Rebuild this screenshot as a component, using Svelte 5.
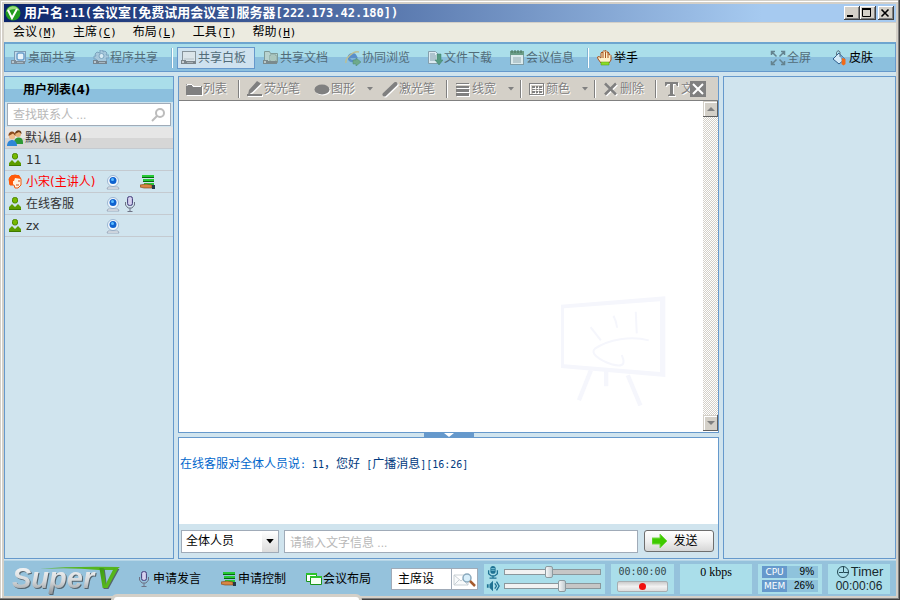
<script lang="ts">
type Tool = { icon: string; label: string; active?: boolean };
type User = {
    name: string;
    icon: string;
    host?: boolean;
    cam?: boolean;
    mic?: boolean;
    share?: boolean;
};

const menus = [
    { label: "会议", key: "M" },
    { label: "主席", key: "C" },
    { label: "布局", key: "L" },
    { label: "工具", key: "T" },
    { label: "帮助", key: "H" },
];

const shareTools: Tool[] = [
    { icon: "desktop", label: "桌面共享" },
    { icon: "gear", label: "程序共享" },
];

const roomTools: Tool[] = [
    { icon: "board", label: "共享白板", active: true },
    { icon: "docs", label: "共享文档" },
    { icon: "browse", label: "协同浏览" },
    { icon: "download", label: "文件下载" },
    { icon: "notes", label: "会议信息" },
];

const drawTools = [
    { icon: "folder", label: "列表", sep: true },
    { icon: "marker", label: "荧光笔" },
    { icon: "ellipse", label: "图形", caret: true },
    { icon: "laser", label: "激光笔", sep: true },
    { icon: "lines", label: "线宽", caret: true, sep: true },
    { icon: "palette", label: "颜色", caret: true, sep: true },
    { icon: "cross", label: "删除", sep: true },
    { icon: "text", label: "文" },
];

const users: User[] = [
    { name: "11", icon: "user" },
    { name: "小宋(主讲人)", icon: "host", host: true, cam: true, share: true },
    { name: "在线客服", icon: "user", cam: true, mic: true },
    { name: "zx", icon: "user", cam: true },
];

let keyword = $state("");
let target = $state("全体人员");
let message = $state("");
let role = $state("主席设");
let micLevel = $state(46);
let speakerLevel = $state(61);
</script>

{#snippet icon(name: string)}
    <svg class="icon" viewBox="0 0 16 16" aria-hidden="true">
        {#if name === "desktop"}
            <rect x="3.5" y="1.5" width="11" height="10" fill="#c5dced" stroke="#7d9db5" />
            <rect x="6" y="3" width="7" height="7" rx="2" fill="#e9f4fb" stroke="#6da0cc" stroke-width="1.500" />
            <path d="M0 10h5v4H0zM5 11h9v3H5z" fill="#7d8d98" />
            <path d="M1 11h2v2H1z" fill="#b9c9d3" />
            <path d="M6 12.500h6" stroke="#a9b9c3" />
        {:else if name === "gear"}
            <path d="M7 0h3v2l2-1 2 2-1 2h3v3h-3l1 2-2 2H5L3 9H1V6h2L2 4l2-2 3 1z" fill="#a7c8dc" stroke="#7ba4bf" />
            <circle cx="8.5" cy="6" r="2.5" fill="#d9ecf5" stroke="#7ba4bf" />
            <path d="M0 10h5v4H0zM5 11h9v3H5z" fill="#76858f" />
            <path d="M1 11h2v2H1z" fill="#b9c9d3" />
            <path d="M6 12.500h6" stroke="#a9b9c3" />
        {:else if name === "board"}
            <rect x="1.5" y="1.5" width="13" height="10" fill="#dbe5ea" stroke="#87949c" />
            <path d="M3 9h10" stroke="#b5c1c8" />
            <path d="M0 10h5v4H0zM5 11h10v3H5z" fill="#7b858b" />
            <path d="M1 11h2v2H1z" fill="#c8ced2" />
            <path d="M6 12.500h6" stroke="#a9b1b6" />
        {:else if name === "docs"}
            <path d="M1.500 1.500h5l1 2h7v9h-13z" fill="#b8d3cf" stroke="#7f9b98" />
            <path d="M7 5h6v6H7z" fill="#dcebea" stroke="#7fa096" />
            <path d="M8 7h4M8 9h4" stroke="#79a28f" />
            <path d="M0 10h5v4H0zM5 11h9v3H5z" fill="#7a8a8d" />
            <path d="M1 11h2v2H1z" fill="#b9c9c9" />
        {:else if name === "browse"}
            <path d="M11 9.500c-1 2-6 2.500-7-1-.8-4 5-6 7-1.500H4" fill="none" stroke="#5a8fc9" stroke-width="2.500" />
            <path d="M1 13C0 9 8 0 14 2" fill="none" stroke="#bcbf93" stroke-width="1.500" />
            <path d="M8 10h3V8l5 4-5 4v-2H8z" fill="#6ea98a" stroke="#4f8a73" stroke-width=".5" />
        {:else if name === "download"}
            <path d="M1.500 1.500h7l2 2v10h-9z" fill="#dcebf2" stroke="#849fad" />
            <path d="M3 4h5M3 6h6M3 8h6M3 10h6" stroke="#7f9caa" />
            <path d="M10 4h4v6h2l-4 5-4-5h2z" fill="#569b82" stroke="#3f806c" stroke-width=".5" />
        {:else if name === "notes"}
            <rect x="1.500" y="1.500" width="13" height="13" fill="#dcebed" stroke="#7f9ca6" />
            <path d="M1 1h14v4H1z" fill="#6b9d87" />
            <path d="M3 0v3M6 0v3M9 0v3M12 0v3" stroke="#46705d" />
            <path d="M4 8h8M4 10h8M4 12h8" stroke="#91a8b0" />
        {:else if name === "hand"}
            <path d="M4 13L1 9 .5 7 2 6.500 4 8V3l1-1 1 1V1.500l1-1 1 1V1l1-.5 1 1v1l1-.5 1 1v2l1-.5 1 1V10l-2 3z" fill="#fff0c9" stroke="#a6511d" />
            <path d="M6 3v5M8.500 2v6M11 3v5" stroke="#a6511d" />
            <path d="M4 12h8v3H4z" fill="#8ddb26" stroke="#4c9a12" stroke-width=".5" />
        {:else if name === "full"}
            <path d="M1.500 5V1.500H5M11 1.500h3.500V5M14.500 11v3.500H11M5 14.500H1.500V11M2 2l4.500 4.500M14 2L9.500 6.500M14 14L9.500 9.500M2 14l4.500-4.500" fill="none" stroke="#64838f" stroke-width="1.500" />
        {:else if name === "skin"}
            <path d="M1 9l6-6 6 6-6 5z" fill="#d6ebf9" stroke="#2f5f8d" />
            <path d="M7 3l6 6-3 2.500z" fill="#75a7cf" />
            <path d="M4.500 6V2.500l1.500-2 2 1.500v5" fill="none" stroke="#5f7687" />
            <path d="M10 8l3.500 1v5l-2 1.500L9.500 14z" fill="#f26a16" />
        {:else if name === "folder"}
            <path d="M0 3h6l1 2h9v9H0z" fill="#808080" />
            <path d="M1 5V3.500h5L7 5.500h8" fill="none" stroke="#fff" />
        {:else if name === "marker"}
            <path d="M10 0l4 2.500L5.500 11 1 14l1-5zM0 13h15v2H0z" fill="#808080" />
        {:else if name === "ellipse"}
            <ellipse cx="8" cy="8.500" rx="7.500" ry="5" fill="#808080" />
        {:else if name === "laser"}
            <path d="M2.500 13.500L13.500 3" stroke="#808080" stroke-width="4" stroke-linecap="round" />
        {:else if name === "lines"}
            <path d="M1 2.500h13" stroke="#808080" />
            <path d="M1 6h13" stroke="#808080" stroke-width="2" />
            <path d="M1 9.500h13M1 13.500h13" stroke="#808080" stroke-width="3" />
        {:else if name === "palette"}
            <rect x=".5" y="2.500" width="14" height="11" fill="none" stroke="#808080" />
            <path d="M3 5h3v2H3zM7 5h2v2H7zM10 5h3v2h-3zM3 8h3v1H3zM7 8h2v1H7zM10 8h3v1h-3zM3 10h3v2H3zM7 10h2v2H7zM10 10h3v2h-3z" fill="#808080" />
        {:else if name === "cross"}
            <path d="M2 2.500l11 11M13 2.500l-11 11" stroke="#808080" stroke-width="2.500" />
        {:else if name === "text"}
            <path d="M1 1h13v4h-1l-1.500-2H9v10l2 1v1H4v-1l2-1V3H3.500L2 5H1z" fill="#808080" />
        {:else if name === "group"}
            <circle cx="11" cy="4" r="3" fill="#e8b27a" />
            <path d="M8 4c0-5 7-5 6.500 0L12 2z" fill="#6b3c17" />
            <path d="M7 13c0-7 9-7 9-1v2H7z" fill="#2f9a35" />
            <circle cx="5" cy="6" r="3.200" fill="#f0bd8c" />
            <path d="M1.500 6c-.5-6 7.500-6 7 0L6 3.500z" fill="#8c4a1c" />
            <path d="M0 16c0-8 10-8 10 0z" fill="#2f86d6" />
        {:else if name === "user"}
            <rect x="4.500" y="1.500" width="5" height="5.500" rx="2" fill="#76b900" stroke="#4b8400" />
            <path d="M1 13.500v-2.500l3-3 3 3 3-3 3 3v2.500z" fill="#5d9d00" />
            <path d="M1 13.500h12" stroke="#3f7a00" />
        {:else if name === "host"}
            <path d="M2 11L1 5l2-3 4-1 4 1 2 3v6l-3 3H7l-1-3z" fill="#fff2df" stroke="#ef5a0b" />
            <path d="M1 9V4l3-3h7l2 4-6-1-1 3H5v4H2z" fill="#ff5a0a" />
            <path d="M10 7h2M8 11h3" stroke="#d1490c" />
        {:else if name === "cam"}
            <circle cx="9" cy="7" r="5.500" fill="#f4f9fd" stroke="#9db6d2" />
            <circle cx="9" cy="6.500" r="3.500" fill="#0f62cf" />
            <circle cx="8.500" cy="5.500" r="1.500" fill="#5cbcff" />
            <path d="M4 13h10l1 2H3z" fill="#f6f8fb" stroke="#8f9cb0" stroke-width=".8" />
        {:else if name === "mic"}
            <rect x="5.500" y=".5" width="5" height="9" rx="2" fill="#aaa4d4" stroke="#4d4980" />
            <path d="M6 3h4M6 5h4M6 7h4M8 1v8" stroke="#f0eefc" stroke-width=".8" />
            <path d="M3.500 6v3l2.500 3h4l2.500-3V6M8 12v3M5.500 15.500h5" fill="none" stroke="#6d7386" />
        {:else if name === "share"}
            <path d="M2 1h12v3H2zM3 5h11v3H3zM4 9h10v2H4z" fill="#27c936" />
            <path d="M2 3.500h12M3 7.500h11" stroke="#086412" />
            <path d="M0 11l6-1 6 1v3H4L0 13z" fill="#d78645" stroke="#7b3d12" stroke-width=".6" />
            <path d="M12 11h3v4h-3z" fill="#263849" />
        {:else if name === "layout"}
            <path d="M.5 2.500h10v8H.5z" fill="#fff" stroke="#18941b" />
            <path d="M0 2h11v2H0z" fill="#2cc22b" />
            <path d="M4.500 5.500h11v8h-11z" fill="#f5fff3" stroke="#18941b" />
            <path d="M4 5h12v2H4z" fill="#2cc22b" />
        {:else if name === "micsolid"}
            <rect x="5" y="1" width="6" height="9" rx="3" fill="#1e7293" />
            <path d="M3 6v4l3 2.500h4l3-2.500V6M8 12v3M4 15h8" fill="none" stroke="#1e7293" stroke-width="1.500" />
            <path d="M6 4h4M6 6h4" stroke="#7dc6d9" />
        {:else if name === "speaker"}
            <path d="M1 6h2v4H1zM4 6l4-4v12l-4-4z" fill="#1e7293" />
            <path d="M10 5l2 3-2 3M12 3l3 5-3 5" fill="none" stroke="#1e7293" stroke-width="1.500" />
        {:else if name === "send"}
            <path d="M0 5h8V1l7 7-7 7v-4H0z" fill="#3fca00" stroke="#76da47" />
        {:else if name === "find"}
            <circle cx="10" cy="6" r="4" fill="none" stroke="#bcbcbc" stroke-width="2" />
            <path d="M7 9l-5 5" stroke="#bcbcbc" stroke-width="2" />
        {:else if name === "clock"}
            <circle cx="8" cy="8" r="5.500" fill="none" stroke="#244a55" />
            <path d="M8.500 2v6.500H14M8 8.500H4" fill="none" stroke="#244a55" />
        {/if}
    </svg>
{/snippet}

{#snippet tool(item: Tool)}
    <button type="button" class="tool" class:active={item.active}>
        {@render icon(item.icon)}{item.label}
    </button>
{/snippet}

{#snippet caret()}
    <svg class="caret" viewBox="0 0 6 4" aria-hidden="true"><path d="M0 0h6L3 3.500z" fill="currentColor" /></svg>
{/snippet}

<div class="window">
    <header class="titlebar">
        <svg class="app-icon" viewBox="0 0 16 16" aria-hidden="true">
            <circle cx="8" cy="8" r="7.500" fill="#239b1f" />
            <path d="M1.500 7C2 0 13-1 14.500 6 10 3 5 4 1.500 7z" fill="#99dc7c" />
            <path d="M3 5l4 8 5-9" fill="none" stroke="#fff" stroke-width="2" />
        </svg>
        <h1>用户名<span>:11(</span>会议室<span>[</span>免费试用会议室<span>]</span>服务器<span>[222.173.42.180])</span></h1>
        <button type="button" class="win-btn" aria-label="最小化">
            <svg viewBox="0 0 12 10"><path d="M2 8h6" stroke="#000" stroke-width="2" /></svg>
        </button>
        <button type="button" class="win-btn" aria-label="最大化">
            <svg viewBox="0 0 12 10"><path d="M1.500 1v7.500h8V1M1 1h9" fill="none" stroke="#000" /><path d="M1 1h9" stroke="#000" stroke-width="2" /></svg>
        </button>
        <button type="button" class="win-btn close" aria-label="关闭">
            <svg viewBox="0 0 12 10"><path d="M2.500 1.500l7 7M9.500 1.500l-7 7" stroke="#000" stroke-width="1.600" /></svg>
        </button>
    </header>

    <nav class="menubar">
        {#each menus as menu}
            <button type="button">{menu.label}<span>(<u>{menu.key}</u>)</span></button>
        {/each}
    </nav>

    <div class="toolbar">
        {#each shareTools as item}{@render tool(item)}{/each}
        <i class="divider"></i>
        {#each roomTools as item}{@render tool(item)}{/each}
        <i class="divider"></i>
        <button type="button" class="tool dark">{@render icon("hand")}举手</button>
        <div class="toolbar-end">
            <button type="button" class="tool">{@render icon("full")}全屏</button>
            <button type="button" class="tool dark">{@render icon("skin")}皮肤</button>
        </div>
    </div>

    <main>
        <aside class="panel">
            <h2>用户列表(4)</h2>
            <div class="search">
                <input type="text" aria-label="查找联系人" placeholder="查找联系人 ..." bind:value={keyword} />
                {@render icon("find")}
            </div>
            <div class="group">{@render icon("group")}默认组 (4)</div>
            <ul>
                {#each users as user}
                    <li class:host={user.host}>
                        {@render icon(user.icon)}
                        <span>{user.name}</span>
                        {@render icon(user.cam ? "cam" : "")}
                        {@render icon(user.mic ? "mic" : "")}
                        {@render icon(user.share ? "share" : "")}
                    </li>
                {/each}
            </ul>
        </aside>

        <div class="center">
            <section class="panel board">
                <div class="draw-bar">
                    {#each drawTools as item}
                        <button type="button" class="draw" class:last={item.icon === "text"} class:menu={item.caret}>
                            {@render icon(item.icon)}{item.label}
                            {#if item.caret}{@render caret()}{/if}
                        </button>
                        {#if item.sep}<i class="draw-sep"></i>{/if}
                    {/each}
                    <button type="button" class="board-close" aria-label="关闭白板">
                        <svg viewBox="0 0 16 16"><path d="M3 3l10 10M13 3L3 13" stroke="#fff" stroke-width="2" /></svg>
                    </button>
                </div>
                <div class="board-body">
                    <div class="canvas">
                        <svg viewBox="48 20 316 330" fill="none" stroke="#f5f6fc" aria-hidden="true">
                            <path d="M48 46L362 20v243L48 236zM57 56v169l289 23V35z" fill="#f5f6fc" fill-rule="evenodd" stroke="none" />
                            <path d="M137 113l31 40M206 79q9 18 11 36M273 67l3 65" stroke-width="6" />
                            <path d="M312 153C260 138 190 150 150 178c-15 12 10 34 50 47 30 8 38 2 36-12l-5-16" stroke-width="6" />
                            <path d="M138 243l-36 90M184 240v51M249 258l38 91" stroke-width="13" />
                        </svg>
                    </div>
                    <div class="scrollbar">
                        <button type="button" aria-label="向上滚动"><svg viewBox="0 0 8 4"><path d="M0 4l4-4 4 4z" fill="#808080" /></svg></button>
                        <button type="button" aria-label="向下滚动"><svg viewBox="0 0 8 4"><path d="M0 0h8L4 4z" fill="#808080" /></svg></button>
                    </div>
                </div>
            </section>

            <button type="button" class="splitter" aria-label="折叠聊天区">
                <svg viewBox="0 0 10 4"><path d="M0 0h10L5 4z" fill="#fff" /></svg>
            </button>

            <section class="panel chat">
                <p><b>在线客服对全体人员说<span>:</span></b><span>{" 11"}</span>，您好<span>{" ["}</span>广播消息<span>][16:26]</span></p>
                <form onsubmit={(event) => event.preventDefault()}>
                    <div class="combo">
                        <select aria-label="发送对象" bind:value={target}>
                            <option>全体人员</option>
                        </select>
                        <span class="combo-arrow">{@render caret()}</span>
                    </div>
                    <input type="text" aria-label="文字信息" placeholder="请输入文字信息 ..." bind:value={message} />
                    <button type="submit">{@render icon("send")}发送</button>
                </form>
            </section>
        </div>

        <aside class="panel"></aside>
    </main>

    <footer>
        <svg class="logo" viewBox="0 0 112 36" role="img" aria-label="SuperV">
            <defs>
                <linearGradient id="silver" x1="0" y1="0" x2="0" y2="1">
                    <stop offset="0" stop-color="#fff" />
                    <stop offset=".6" stop-color="#d5d8da" />
                    <stop offset="1" stop-color="#8f9498" />
                </linearGradient>
                <linearGradient id="leaf" x1="0" y1="0" x2="1" y2="1">
                    <stop offset="0" stop-color="#2f8f12" />
                    <stop offset="1" stop-color="#75d422" />
                </linearGradient>
            </defs>
            <path d="M30 8Q60 5 110 6l-4 3H89Q60 6 30 8z" fill="#55b51f" />
            <text x="2" y="27" fill="url(#silver)">Super</text>
            <text x="87" y="27" fill="url(#leaf)">V</text>
        </svg>
        <button type="button" class="action">{@render icon("mic")}申请发言</button>
        <button type="button" class="action">{@render icon("share")}申请控制</button>
        <button type="button" class="action">{@render icon("layout")}会议布局</button>

        <div class="meters">
            <div class="role">
                <input type="text" aria-label="主席设置" bind:value={role} />
                <button type="button" aria-label="查找">
                    <svg viewBox="0 0 25 21">
                        <path d="M2 6h14v10H2zM2 6l7 6 7-6M2 16l5-5M16 16l-5-5" fill="#f8fafb" stroke="#c8d0d5" />
                        <circle cx="15" cy="9" r="4" fill="#d7eefa" stroke="#8aa9bd" stroke-width="1.500" />
                        <path d="M18 12l5 5" stroke="#a55b2e" stroke-width="2.500" />
                    </svg>
                </button>
            </div>
            <div class="box levels">
                <label>{@render icon("micsolid")}<input type="range" aria-label="麦克风音量" bind:value={micLevel} style:--level={`${micLevel}%`} /></label>
                <label>{@render icon("speaker")}<input type="range" aria-label="扬声器音量" bind:value={speakerLevel} style:--level={`${speakerLevel}%`} /></label>
            </div>
            <div class="box record">
                <span>00:00:00</span>
                <button type="button" aria-label="录制"><i></i></button>
            </div>
            <div class="box speed">0 kbps</div>
            <div class="box usage">
                <div><b>CPU</b><span>9%</span></div>
                <div><b>MEM</b><span>26%</span></div>
            </div>
            <div class="box timer">
                <div>{@render icon("clock")}Timer</div>
                <time>00:00:06</time>
            </div>
        </div>
    </footer>
    <div class="peek"></div>
</div>

<style>
:global(body) {
    background: #d4d0c8;
}

.window {
    --line: #6699cc;
    --sky: #d0e4ee;
    --glass: linear-gradient(#aadeea 50%, #8cc0de 50%);
    position: relative;
    display: flex;
    flex-direction: column;
    box-sizing: border-box;
    min-height: 100vh;
    padding: 4px;
    overflow: hidden;
    background: #d4d0c8;
    box-shadow: inset -1px -1px #404040, inset -2px -2px #808080, inset 1px 1px #d4d0c8, inset 2px 2px #fff;
    color: #000;
    font: 12px/16px "Liberation Sans", "Noto Sans CJK SC", sans-serif;
}

.window * {
    box-sizing: border-box;
}

button,
input,
select {
    margin: 0;
    padding: 0;
    border: 0;
    border-radius: 0;
    background: none;
    color: inherit;
    font: inherit;
}

svg {
    display: block;
    flex: none;
}

h1,
h2,
p,
ul {
    margin: 0;
    padding: 0;
}

.icon {
    width: 16px;
    height: 16px;
}

.caret {
    width: 6px;
    height: 4px;
}

.titlebar {
    display: flex;
    align-items: center;
    height: 18px;
    padding: 0 2px 0 1px;
    background: linear-gradient(90deg, #0a246a, #a6caf0 85%);
    color: #fff;
}

.app-icon {
    width: 16px;
    height: 16px;
}

.titlebar h1 {
    flex: 1;
    margin-left: 3px;
    font-size: 13px;
    line-height: 18px;
    white-space: nowrap;
}

.titlebar h1 span {
    font: bold 12px/18px "DejaVu Sans Mono", monospace;
}

.win-btn {
    width: 16px;
    height: 14px;
    padding: 1px;
    background: #d4d0c8;
    box-shadow: inset -1px -1px #404040, inset 1px 1px #fff, inset -2px -2px #808080;
}

.win-btn svg {
    width: 12px;
    height: 10px;
}

.win-btn.close {
    margin-left: 2px;
}

.menubar {
    display: flex;
    gap: 16px;
    height: 20px;
    padding: 0 9px;
    border-top: 1px solid #d4d0c8;
    background: #ecebe0;
}

.menubar span,
.chat p span,
.record span {
    font-family: "DejaVu Sans Mono", monospace;
    font-size: 10px;
}

.menubar span {
    font-size: 11px;
}

.toolbar {
    display: flex;
    align-items: center;
    gap: 4px;
    height: 30px;
    padding: 1px 2px 0;
    border: 1px solid var(--line);
    border-top-width: 2px;
    border-top-color: #6da5cf;
    background: var(--glass);
}

.tool {
    display: flex;
    align-items: center;
    gap: 1px;
    height: 22px;
    padding: 0 8px 0 3px;
    border: 1px solid transparent;
    color: #526c79;
    white-space: nowrap;
}

.tool.active {
    border-color: var(--line);
    background: #cfe2ef;
}

.tool.dark {
    color: #000;
}

.divider {
    width: 2px;
    height: 20px;
    border-left: 1px solid #7fb4d4;
    background: #fff;
}

.toolbar-end {
    display: flex;
    gap: 8px;
    margin-left: auto;
    padding-right: 11px;
}

main {
    display: grid;
    flex: 1;
    grid-template-columns: 170px minmax(0, 1fr) 173px;
    gap: 4px;
    padding: 4px 0 1px;
    background: var(--sky);
}

.panel {
    border: 1px solid var(--line);
    background: var(--sky);
}

.panel h2 {
    height: 25px;
    padding-left: 18px;
    background: var(--glass);
    font: bold 12px/27px "DejaVu Sans", "Noto Sans CJK SC", sans-serif;
}

.search {
    display: flex;
    align-items: center;
    height: 23px;
    margin: 1px 2px;
    padding: 0 4px 0 5px;
    border: 1px solid #a0abb8;
    background: #fff;
}

.search input {
    flex: 1;
    min-width: 0;
}

input::placeholder {
    color: #b8b8b8;
    opacity: 1;
}

input:focus-visible,
select:focus-visible {
    outline: none;
}

.group {
    display: flex;
    align-items: center;
    gap: 2px;
    height: 22px;
    padding-left: 2px;
    border-bottom: 1px solid #c4cad0;
    background: linear-gradient(#e6e6e6 50%, #d6d6d6 50%);
}

.group,
li {
    color: #333;
    font-family: "DejaVu Sans", "Noto Sans CJK SC", sans-serif;
}

ul {
    list-style: none;
}

li {
    display: grid;
    grid-template-columns: 16px 1fr 16px 16px 16px;
    align-items: center;
    gap: 2px;
    height: 22px;
    padding: 0 17px 0 3px;
    border-bottom: 1px solid #c4cad0;
    white-space: nowrap;
}

li.host {
    color: #f00;
}

.center {
    display: flex;
    flex-direction: column;
}

.board {
    display: flex;
    flex: 1;
    flex-direction: column;
}

.draw-bar {
    display: flex;
    align-items: center;
    height: 24px;
    padding-right: 12px;
    border-bottom: 1px solid #808080;
    background: #d4d0c8;
}

.draw {
    display: flex;
    flex: none;
    align-items: center;
    gap: 1px;
    padding: 0 7px;
    color: #808080;
    text-shadow: 1px 1px #fff;
    white-space: nowrap;
}

.draw .icon {
    filter: drop-shadow(1px 1px #fff);
}

.draw.menu {
    padding-right: 2px;
}

.draw .caret {
    margin-left: 11px;
}

.draw.last {
    flex: 0 1 auto;
    min-width: 0;
    padding-right: 0;
}

.draw-sep {
    flex: none;
    width: 2px;
    height: 18px;
    margin-left: 4px;
    border-left: 1px solid #808080;
    background: #fff;
}

.board-close {
    z-index: 1;
    flex: none;
    width: 16px;
    height: 16px;
    margin-left: auto;
    background: #808080;
}

.board-body {
    display: flex;
    flex: 1;
    background: #fff;
}

.canvas {
    display: flex;
    flex: 1;
    align-items: flex-end;
    justify-content: flex-end;
    padding: 0 37px 26px 0;
}

.canvas svg {
    width: 105px;
    height: 110px;
}

.scrollbar {
    display: flex;
    flex-direction: column;
    justify-content: space-between;
    width: 15px;
    margin-bottom: 1px;
    background: repeating-conic-gradient(#d4d0c8 0 25%, #fff 0 50%) 0 0 / 2px 2px;
}

.scrollbar button {
    display: flex;
    align-items: center;
    justify-content: center;
    height: 16px;
    background: #d4d0c8;
    box-shadow: inset -1px -1px #606060, inset 1px 1px #d4d0c8, inset 2px 2px #fff;
}

.scrollbar svg {
    width: 8px;
    height: 4px;
}

.splitter {
    display: flex;
    align-self: center;
    justify-content: center;
    width: 50px;
    height: 4px;
    background: var(--line);
}

.splitter svg {
    width: 10px;
    height: 4px;
}

.chat p {
    height: 86px;
    padding: 18px 0 0 1px;
    background: #fff;
    color: #003a80;
    white-space: pre;
}

.chat p b {
    color: #0066cc;
    font-weight: normal;
}

.chat form {
    display: flex;
    padding: 6px 4px 5px 2px;
}

.combo {
    display: grid;
    width: 98px;
    height: 23px;
    border: 1px solid #a0abb8;
    background: #fff;
}

.combo > * {
    grid-area: 1 / 1;
}

.combo select {
    width: 100%;
    padding: 0 18px 2px 4px;
    appearance: none;
}

.combo-arrow {
    display: flex;
    align-items: center;
    justify-content: center;
    justify-self: end;
    width: 16px;
    background: linear-gradient(#fff, #dcdcdc);
    pointer-events: none;
}

.combo-arrow .caret {
    width: 8px;
    height: 5px;
}

.chat form > input {
    flex: 1;
    min-width: 0;
    height: 23px;
    margin: 0 6px 0 5px;
    padding: 2px 5px 0;
    border: 1px solid #a0abb8;
    background: #fff;
}

.chat form > button {
    display: flex;
    align-items: center;
    justify-content: center;
    gap: 5px;
    width: 70px;
    height: 22px;
    padding-right: 8px;
    border: 1px solid #6e6e6e;
    border-radius: 3px;
    background: linear-gradient(#fff, #f0f0f0 50%, #d6d6d6);
}

footer {
    display: flex;
    align-items: center;
    gap: 20px;
    height: 36px;
    padding: 0 6px;
    border-top: 1px solid #b5d5e7;
    background: #95c2dc;
}

.logo {
    width: 112px;
    height: 36px;
    margin-right: -6px;
}

.logo text {
    font: italic bold 29px "Liberation Sans", sans-serif;
    filter: drop-shadow(1px 1px #54646e);
}

.action {
    display: flex;
    flex: none;
    align-items: center;
    gap: 1px;
}

.meters {
    display: flex;
    gap: 6px;
    align-items: center;
    margin-left: auto;
}

.role {
    display: flex;
    width: 87px;
    height: 22px;
    border: 1px solid #a0abb8;
    background: #fff;
}

.role input {
    flex: 1;
    min-width: 0;
    padding-left: 6px;
}

.role button {
    width: 26px;
    border-left: 1px solid #a0abb8;
}

.box {
    height: 30px;
    background: #aadeea;
}

.levels {
    width: 121px;
    padding: 1px 4px 1px 2px;
}

.levels label {
    display: flex;
    align-items: center;
    gap: 4px;
    height: 14px;
}

.levels .icon {
    width: 14px;
    height: 14px;
}

.levels input {
    flex: 1;
    min-width: 0;
    height: 14px;
    appearance: none;
}

.levels input::-webkit-slider-runnable-track {
    height: 6px;
    border: 1px solid #8b979c;
    background: linear-gradient(90deg, #f2f2f2 var(--level), #c6c6c6 var(--level));
}

.levels input::-webkit-slider-thumb {
    width: 8px;
    height: 12px;
    margin-top: -4px;
    border: 1px solid #8d9a9f;
    border-radius: 2px;
    background: linear-gradient(90deg, #f4f6f7, #c3cdd1);
    appearance: none;
}

.record {
    display: flex;
    flex-direction: column;
    align-items: center;
    width: 63px;
    color: #34454b;
}

.record button {
    display: flex;
    align-items: center;
    justify-content: center;
    width: 51px;
    height: 11px;
    margin-top: 1px;
    border: 1px solid #a7aeb1;
    border-radius: 2px;
    background: linear-gradient(#ccc, #f2f2f2 50%, #dcdcdc);
}

.record i {
    width: 7px;
    height: 7px;
    border-radius: 50%;
    background: #f00f0f;
}

.speed {
    width: 72px;
    font-family: "Liberation Serif", serif;
    text-align: center;
}

.usage {
    display: grid;
    gap: 2px;
    width: 64px;
    padding: 2px 4px;
}

.usage div {
    display: flex;
    background: #8fc3dc;
}

.usage b {
    width: 25px;
    background: var(--line);
    color: #fff;
    font: 9px/12px "DejaVu Sans", sans-serif;
    text-align: center;
}

.usage span {
    flex: 1;
    padding-right: 4px;
    font-size: 10px;
    line-height: 12px;
    text-align: right;
}

.timer {
    width: 62px;
    color: #17292f;
    text-align: center;
}

.timer div {
    display: flex;
    align-items: center;
    justify-content: center;
    font-size: 13px;
}

.timer time {
    display: block;
    line-height: 13px;
}

/* edge of a window docked under this one */
.peek {
    position: absolute;
    bottom: -6px;
    left: 111px;
    width: 251px;
    height: 12px;
    border: 3px solid #d4d0c8;
    border-radius: 6px 6px 0 0;
    background: #fff;
}
</style>
